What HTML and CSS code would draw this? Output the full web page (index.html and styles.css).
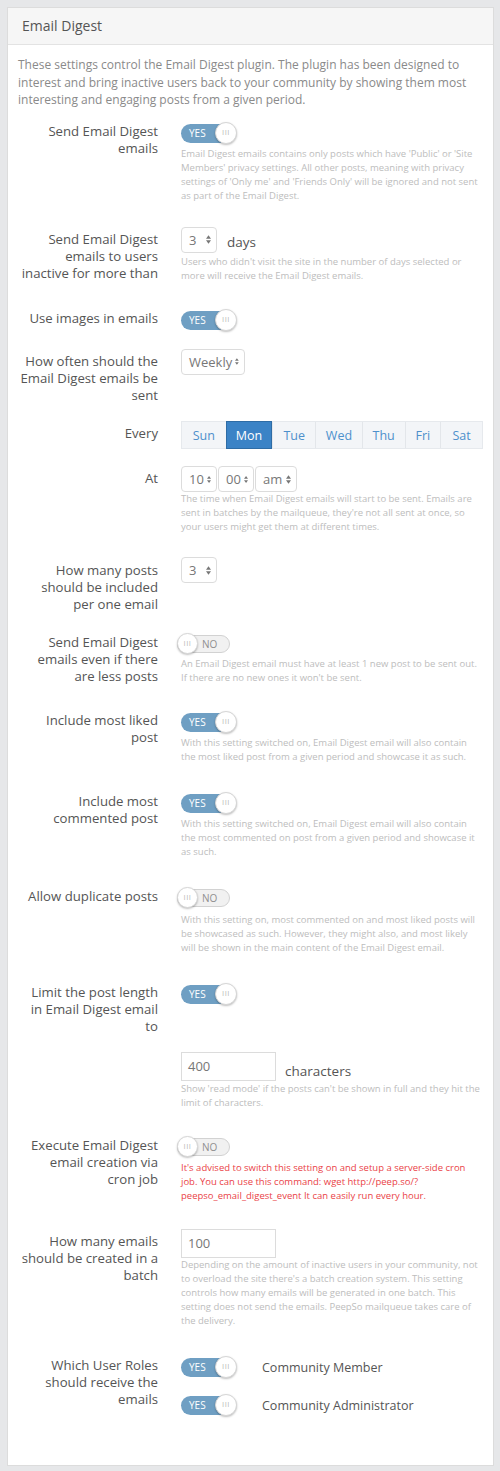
FILE: index.html
```html
<!DOCTYPE html>
<html>
<head>
<meta charset="utf-8">
<title>Email Digest</title>
<link rel="stylesheet" href="styles.css">
</head>
<body>
<div class="card">
  <div class="card-header">Email Digest</div>
  <div class="card-body">
    <p class="intro">These settings control the Email Digest plugin. The plugin has been designed to interest and bring inactive users back to your community by showing them most interesting and engaging posts from a given period.</p>

    <div class="row tight">
      <div class="label">Send Email Digest emails</div>
      <div class="control">
        <span class="toggle on"><span class="t-text">YES</span><span class="knob">III</span></span>
        <p class="help">Email Digest emails contains only posts which have 'Public' or 'Site Members' privacy settings. All other posts, meaning with privacy settings of 'Only me' and 'Friends Only' will be ignored and not sent as part of the Email Digest.</p>
      </div>
    </div>

    <div class="row help-row">
      <div class="label pad">Send Email Digest emails to users inactive for more than</div>
      <div class="control">
        <div class="inline">
          <span class="select w36">3<svg class="arr" viewBox="0 0 6 10"><path d="M3 0L6 4H0Z M3 10L0 6H6Z"/></svg></span>
          <span class="unit">days</span>
        </div>
        <p class="help sel">Users who didn't visit the site in the number of days selected or more will receive the Email Digest emails.</p>
      </div>
    </div>

    <div class="row plain-plus">
      <div class="label">Use images in emails</div>
      <div class="control">
        <span class="toggle on"><span class="t-text">YES</span><span class="knob">III</span></span>
      </div>
    </div>

    <div class="row">
      <div class="label pad">How often should the Email Digest emails be sent</div>
      <div class="control">
        <span class="select w64">Weekly<svg class="arr" viewBox="0 0 6 10"><path d="M3 0L6 4H0Z M3 10L0 6H6Z"/></svg></span>
      </div>
    </div>

    <div class="row">
      <div class="label pad-d">Every</div>
      <div class="control">
        <div class="days">
          <span class="day w44">Sun</span>
          <span class="day w47 active">Mon</span>
          <span class="day w43">Tue</span>
          <span class="day w47">Wed</span>
          <span class="day w43">Thu</span>
          <span class="day w36">Fri</span>
          <span class="day w42">Sat</span>
        </div>
      </div>
    </div>

    <div class="row tight-s">
      <div class="label pad-d">At</div>
      <div class="control">
        <div class="inline time">
          <span class="select w36">10<svg class="arr" viewBox="0 0 6 10"><path d="M3 0L6 4H0Z M3 10L0 6H6Z"/></svg></span>
          <span class="select w36">00<svg class="arr" viewBox="0 0 6 10"><path d="M3 0L6 4H0Z M3 10L0 6H6Z"/></svg></span>
          <span class="select w42">am<svg class="arr" viewBox="0 0 6 10"><path d="M3 0L6 4H0Z M3 10L0 6H6Z"/></svg></span>
        </div>
        <p class="help none">The time when Email Digest emails will start to be sent. Emails are sent in batches by the mailqueue, they're not all sent at once, so your users might get them at different times.</p>
      </div>
    </div>

    <div class="row mid-l">
      <div class="label pad">How many posts should be included per one email</div>
      <div class="control">
        <span class="select w36">3<svg class="arr" viewBox="0 0 6 10"><path d="M3 0L6 4H0Z M3 10L0 6H6Z"/></svg></span>
      </div>
    </div>

    <div class="row help-row">
      <div class="label">Send Email Digest emails even if there are less posts</div>
      <div class="control">
        <span class="toggle off"><span class="knob">III</span><span class="t-text">NO</span></span>
        <p class="help">An Email Digest email must have at least 1 new post to be sent out. If there are no new ones it won't be sent.</p>
      </div>
    </div>

    <div class="row loose">
      <div class="label">Include most liked post</div>
      <div class="control">
        <span class="toggle on"><span class="t-text">YES</span><span class="knob">III</span></span>
        <p class="help">With this setting switched on, Email Digest email will also contain the most liked post from a given period and showcase it as such.</p>
      </div>
    </div>

    <div class="row loose">
      <div class="label">Include most commented post</div>
      <div class="control">
        <span class="toggle on"><span class="t-text">YES</span><span class="knob">III</span></span>
        <p class="help">With this setting switched on, Email Digest email will also contain the most commented on post from a given period and showcase it as such.</p>
      </div>
    </div>

    <div class="row loose">
      <div class="label">Allow duplicate posts</div>
      <div class="control">
        <span class="toggle off"><span class="knob">III</span><span class="t-text">NO</span></span>
        <p class="help m6">With this setting on, most commented on and most liked posts will be showcased as such. However, they might also, and most likely will be shown in the main content of the Email Digest email.</p>
      </div>
    </div>

    <div class="row">
      <div class="label">Limit the post length in Email Digest email to</div>
      <div class="control">
        <span class="toggle on"><span class="t-text">YES</span><span class="knob">III</span></span>
      </div>
    </div>

    <div class="row help-row">
      <div class="label"></div>
      <div class="control">
        <div class="inline">
          <span class="input">400</span>
          <span class="unit low">characters</span>
        </div>
        <p class="help inp">Show 'read mode' if the posts can't be shown in full and they hit the limit of characters.</p>
      </div>
    </div>

    <div class="row tight-l">
      <div class="label">Execute Email Digest email creation via cron job</div>
      <div class="control">
        <span class="toggle off"><span class="knob">III</span><span class="t-text">NO</span></span>
        <p class="help warn m5">It's advised to switch this setting on and setup a server-side cron job. You can use this command: wget http://peep.so/?peepso_email_digest_event It can easily run every hour.</p>
      </div>
    </div>

    <div class="row loose">
      <div class="label pad">How many emails should be created in a batch</div>
      <div class="control">
        <span class="input">100</span>
        <p class="help none">Depending on the amount of inactive users in your community, not to overload the site there's a batch creation system. This setting controls how many emails will be generated in one batch. This setting does not send the emails. PeepSo mailqueue takes care of the delivery.</p>
      </div>
    </div>

    <div class="row last">
      <div class="label">Which User Roles should receive the emails</div>
      <div class="control roles">
        <div class="role">
          <span class="toggle on"><span class="t-text">YES</span><span class="knob">III</span></span>
          <span class="role-name">Community Member</span>
        </div>
        <div class="role">
          <span class="toggle on"><span class="t-text">YES</span><span class="knob">III</span></span>
          <span class="role-name">Community Administrator</span>
        </div>
      </div>
    </div>
  </div>
</div>
</body>
</html>
```

FILE: styles.css
```css
* { box-sizing: border-box; }

html, body {
  margin: 0;
  padding: 0;
}

body {
  background: #e6e7e9;
  padding: 7px 6px 7px 7px;
  font-family: "Open Sans", "Liberation Sans", sans-serif;
  color: #555;
}

.card {
  background: #fff;
  border: 1px solid #dcdcdc;
}

.card-header {
  height: 37px;
  background: #f6f6f6;
  border-bottom: 1px solid #e3e3e3;
  font-size: 14px;
  line-height: 36px;
  padding-left: 14px;
  color: #555;
}

.card-body {
  padding: 11px 10px 12px 10px;
}

.intro {
  margin: 0 0 15px;
  font-size: 12px;
  line-height: 17.5px;
  color: #8a8a8a;
}

.row {
  display: grid;
  grid-template-columns: 140px 1fr;
  column-gap: 23px;
  margin-bottom: 17px;
}

.row.plain-plus { margin-bottom: 19px; }
.row.help-row { margin-bottom: 28px; }
.row.tight { margin-bottom: 24px; }
.row.tight-s { margin-bottom: 23px; }
.row.tight-l { margin-bottom: 26px; }
.row.mid-l { margin-bottom: 22px; }
.row.loose { margin-bottom: 30px; }
.row.last { margin-bottom: 38px; }

.label {
  text-align: right;
  font-size: 13.2px;
  line-height: 17px;
  color: #555;
  margin-top: -1px;
  padding-left: 2px;
}

.label.pad { margin-top: 0; padding-top: 4.5px; }
.label.pad-d { margin-top: 0; padding-top: 3.5px; }

.control {
  min-width: 0;
}

.help {
  margin: 4px 0 0;
  font-size: 9.5px;
  line-height: 14px;
  color: #bdbdbd;
}

.help.sel { margin-top: 2px; }
.help.inp { margin-top: 1px; }
.help.none { margin-top: 0; }
.help.m5 { margin-top: 5px; }
.help.m6 { margin-top: 6px; }
.help.warn { color: #ea3f47; }

/* toggle */
.toggle {
  display: flex;
  align-items: center;
  width: 55px;
  height: 19px;
  border-radius: 10px;
  font-size: 10px;
  line-height: 1;
}

.toggle.on {
  background: #6f9fc3;
  justify-content: space-between;
}

.toggle.on .t-text {
  color: #fff;
  padding-left: 8px;
}

.toggle.off {
  background: #f1f1f1;
  border: 1px solid #d2d2d2;
  margin-left: -4px;
  width: 53px;
  height: 18px;
}

.toggle.off .t-text {
  color: #8f8f8f;
  padding-left: 4px;
}

.knob {
  width: 22px;
  height: 22px;
  border-radius: 50%;
  background: #fff;
  border: 1px solid #d6d6d6;
  box-shadow: 0 1px 2px rgba(0,0,0,0.25);
  display: flex;
  align-items: center;
  justify-content: center;
  font-size: 7.5px;
  letter-spacing: 0.5px;
  color: #b8b8b8;
  flex: none;
}

.toggle.on .knob { margin-right: -1px; }
.toggle.off .knob { margin-left: -1px; width: 21px; height: 21px; }

/* selects */
.inline {
  display: flex;
  align-items: flex-start;
}

.time { gap: 1px; }

.select {
  display: inline-flex;
  align-items: center;
  justify-content: space-between;
  height: 26px;
  border: 1px solid #dcdcdc;
  border-radius: 4px;
  padding: 0 5px 0 7px;
  font-size: 13px;
  color: #777;
  background: #fff;
}

.w36 { width: 36px; }
.w42 { width: 42px; }
.w64 { width: 64px; }

.arr {
  width: 5px;
  height: 9px;
  fill: #777;
  margin-left: 3px;
}

.unit {
  font-size: 13.5px;
  color: #555;
  margin-left: 10px;
  padding-top: 6px;
}

.unit.low {
  margin-left: 9px;
  padding-top: 10px;
}

/* days */
.days {
  display: flex;
  height: 28px;
  background: #f3f5f8;
  border: 1px solid #e6e9ed;
}

.day {
  display: flex;
  align-items: center;
  justify-content: center;
  font-size: 12.5px;
  color: #4d90cc;
  border-left: 1px solid #e3e6ea;
}

.day:first-child { border-left: 0; }

.day.active {
  background: #3b83c6;
  color: #fff;
  border: 1px solid #2e6ca5;
  margin: -1px 0;
}

.w44 { width: 44px; }
.w47 { width: 47px; }
.w43 { width: 43px; }

/* input */
.input {
  display: flex;
  align-items: center;
  width: 95px;
  height: 29px;
  border: 1px solid #dcdcdc;
  padding-left: 6px;
  font-size: 13px;
  color: #777;
}

/* roles */
.roles {
  display: flex;
  flex-direction: column;
  gap: 19px;
}

.role {
  display: flex;
  align-items: center;
}

.role-name {
  margin-left: 26px;
  font-size: 12.5px;
  color: #555;
}
```
